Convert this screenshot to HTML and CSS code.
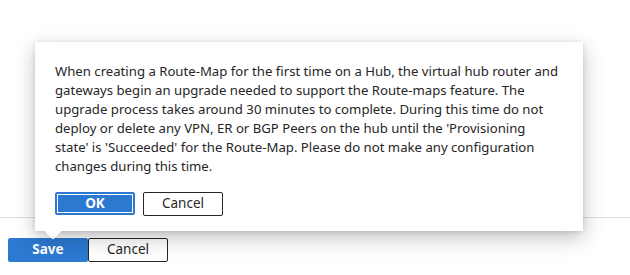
FILE: index.html
```html
<!DOCTYPE html>
<html lang="en">
<head>
<meta charset="utf-8">
<link rel="stylesheet" href="styles.css">
</head>
<body>
<div class="page">
  <div class="content"></div>
  <div class="footer">
    <button class="btn btn-primary">Save</button>
    <button class="btn btn-default">Cancel</button>
  </div>
  <div class="callout" role="dialog">
    <p class="callout-text">When creating a Route-Map for the first time on a Hub, the virtual hub router and<br>gateways begin an upgrade needed to support the Route-maps feature. The<br>upgrade process takes around 30 minutes to complete. During this time do not<br>deploy or delete any VPN, ER or BGP Peers on the hub until the 'Provisioning<br>state' is 'Succeeded' for the Route-Map. Please do not make any configuration<br>changes during this time.</p>
    <div class="callout-actions">
      <button class="btn btn-primary btn-focus">OK</button>
      <button class="btn btn-default">Cancel</button>
    </div>
  </div>
</div>
</body>
</html>
```

FILE: styles.css
```css
html, body {
  margin: 0;
  padding: 0;
  background: #ffffff;
}
body {
  font-family: "Noto Sans", "Open Sans", sans-serif;
  color: #262626;
  width: 630px;
  height: 275px;
  overflow: hidden;
}
.page {
  position: relative;
  width: 630px;
  height: 275px;
}
.content {
  height: 217px;
}
.footer {
  border-top: 1px solid #dcdcdc;
  padding: 20px 8px 0;
  display: flex;
}
.btn {
  box-sizing: border-box;
  width: 80px;
  height: 24px;
  border-radius: 2px;
  font-family: inherit;
  font-size: 13.5px;
  line-height: 1;
  padding: 0;
  cursor: pointer;
}
.btn-primary {
  background: #2b79d1;
  border: 1px solid #2b79d1;
  color: #ffffff;
  font-weight: 700;
}
.btn-default {
  background: #ffffff;
  border: 1px solid #262626;
  color: #262626;
}
.btn-focus {
  height: 23px;
  box-shadow: inset 0 0 0 1px #2b79d1, inset 0 0 0 2px #ffffff;
}
.callout {
  position: absolute;
  left: 35px;
  top: 42px;
  width: 548px;
  height: 189px;
  box-sizing: border-box;
  padding: 20px 10px 0 20px;
  background: #ffffff;
  box-shadow: 0 7px 20px rgba(0, 0, 0, 0.24), 0 1px 5px rgba(0, 0, 0, 0.12);
}
.callout::after {
  content: "";
  position: absolute;
  left: 12px;
  bottom: -6px;
  width: 12px;
  height: 12px;
  background: #ffffff;
  transform: rotate(45deg);
}
.callout-text {
  margin: 0;
  font-size: 13.16px;
  line-height: 19px;
  white-space: nowrap;
}
.callout-actions {
  display: flex;
  gap: 8px;
  margin-top: 16px;
}
```
